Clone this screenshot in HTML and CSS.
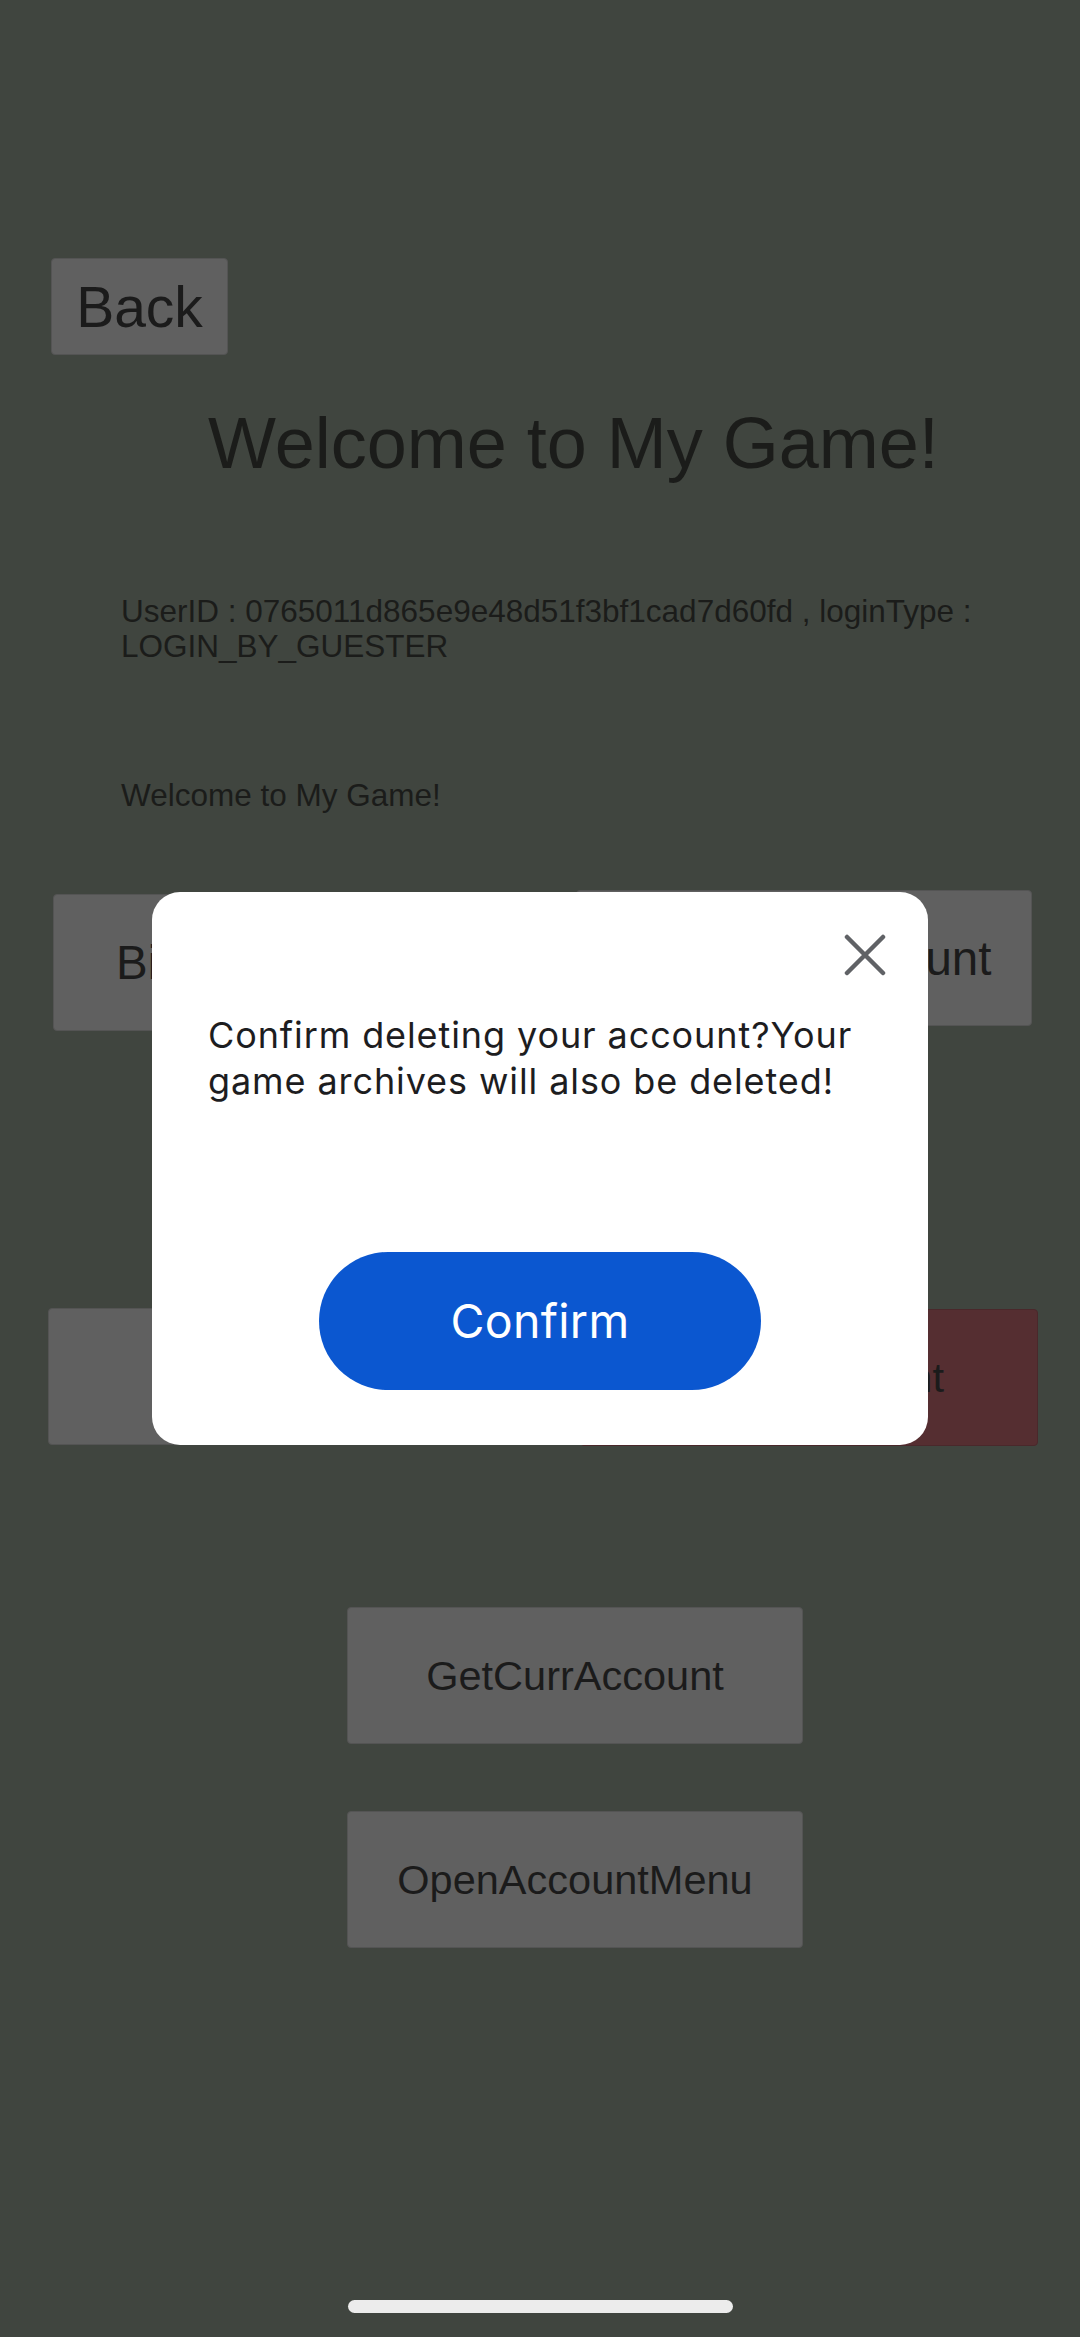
FILE: index.html
```html
<!DOCTYPE html>
<html lang="en">
<head>
<meta charset="utf-8">
<title>My Game</title>
<link rel="stylesheet" href="styles.css">
</head>
<body>
<main class="page">
  <button class="btn btn-back">Back</button>
  <h1 class="title">Welcome to My Game!</h1>
  <p class="info">UserID : 0765011d865e9e48d51f3bf1cad7d60fd , loginType : LOGIN_BY_GUESTER</p>
  <p class="info info-welcome">Welcome to My Game!</p>

  <div class="row row-1">
    <button class="btn btn-wide btn-large btn-bind">BindingAccount</button>
    <button class="btn btn-wide btn-large btn-switch">SwitchingAccount</button>
  </div>

  <div class="row row-2">
    <button class="btn btn-wide btn-logout">Logout</button>
    <button class="btn btn-wide btn-danger">DeleteAccount</button>
  </div>

  <div class="stack">
    <button class="btn btn-wide">GetCurrAccount</button>
    <button class="btn btn-wide">OpenAccountMenu</button>
  </div>

  <div class="home-indicator"></div>
</main>

<div class="overlay">
  <div class="dialog" role="dialog">
    <div class="dialog-head">
      <button class="close" aria-label="Close">
        <svg viewBox="0 0 42 42" width="42" height="42">
          <path d="M3 3 L39 39 M39 3 L3 39" stroke="#606266" stroke-width="4.5" stroke-linecap="round" fill="none"/>
        </svg>
      </button>
    </div>
    <p class="dialog-msg">Confirm deleting your account?Your game archives will also be deleted!</p>
    <button class="confirm">Confirm</button>
  </div>
</div>
</body>
</html>
```

FILE: styles.css
```css
* { box-sizing: border-box; }

html, body {
  margin: 0;
  padding: 0;
}

body {
  width: 1080px;
  height: 2337px;
  background: #40453f;
  font-family: "Liberation Sans", Arial, sans-serif;
  color: #1b1c1a;
  overflow: hidden;
}

.page {
  display: flex;
  flex-direction: column;
  align-items: flex-start;
  padding-top: 258px;
}

.btn {
  display: flex;
  align-items: center;
  justify-content: center;
  margin: 0;
  padding: 0;
  background: #606060;
  border: 1.5px solid #545454;
  border-radius: 4px;
  font-family: "Liberation Sans", Arial, sans-serif;
  color: #1b1b1b;
  white-space: nowrap;
  overflow: hidden;
}

.btn-back {
  margin-left: 51px;
  width: 177px;
  height: 97px;
  font-size: 57px;
}

.title {
  margin: 48px 0 0 208px;
  font-size: 72px;
  line-height: 80px;
  font-weight: normal;
  white-space: nowrap;
}

.info {
  margin: 111px 0 0 121px;
  width: 890px;
  font-size: 31.5px;
  line-height: 35px;
}

.info-welcome {
  margin-top: 114px;
}

.row {
  display: flex;
  align-items: flex-start;
  width: 100%;
}

.row-1 {
  margin-top: 77px;
  padding-left: 53px;
  gap: 67px;
}

.row-2 {
  margin-top: 277px;
  padding-left: 48px;
  gap: 76px;
}

.btn-wide {
  width: 456px;
  height: 137px;
  font-size: 41.5px;
}

.btn-large {
  font-size: 47.5px;
}

.btn-bind { margin-top: 4px; }
.btn-switch { height: 136px; }

.btn-danger {
  width: 458px;
  margin-top: 1px;
  background: #552e31;
  border-color: #4a282b;
}

.stack {
  display: flex;
  flex-direction: column;
  gap: 67px;
  margin-top: 161px;
  padding-left: 347px;
}

.home-indicator {
  align-self: center;
  margin-top: 352px;
  margin-left: 1px;
  width: 385px;
  height: 13px;
  border-radius: 7px;
  background: #ececec;
}

/* dialog */
.overlay {
  position: fixed;
  inset: 0;
  display: flex;
  align-items: center;
  justify-content: center;
}

.dialog {
  width: 776px;
  height: 553px;
  background: #ffffff;
  border-radius: 28px;
  padding: 42px 42px 55px 42px;
  display: flex;
  flex-direction: column;
  font-family: Inter, "Noto Sans", sans-serif;
}

.dialog-head {
  display: flex;
  justify-content: flex-end;
}

.close {
  width: 42px;
  height: 42px;
  padding: 0;
  margin: 0;
  border: 0;
  background: transparent;
  display: block;
}

.close svg { display: block; }

.dialog-msg {
  margin: 36px 0 0 14px;
  width: 670px;
  font-size: 36px;
  letter-spacing: 0.9px;
  line-height: 46px;
  color: #1d1d1f;
}

.confirm {
  margin: auto 0 0 0;
  align-self: center;
  width: 442px;
  height: 138px;
  border: 0;
  border-radius: 69px;
  background: #0b57d0;
  color: #ffffff;
  font-family: Inter, "Noto Sans", sans-serif;
  font-size: 46.5px;
  letter-spacing: 0.3px;
}
```
